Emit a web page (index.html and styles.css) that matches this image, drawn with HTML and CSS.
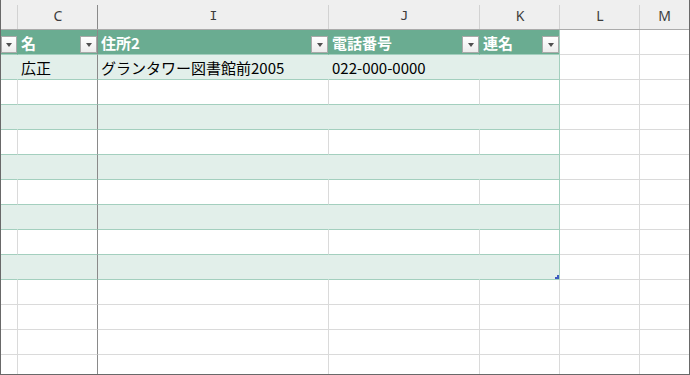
FILE: index.html
```html
<!DOCTYPE html>
<html lang="ja">
<head>
  <meta charset="UTF-8" />
  <title>連絡先リスト</title>
  <link rel="stylesheet" href="styles.css">
</head>
<body>

  <div class="sheet">
    <!-- 列見出し -->
    <div class="row row--cols">
      <div class="cell"></div>
      <div class="cell">C</div>
      <div class="cell"><span class="mono">I</span></div>
      <div class="cell"><span class="mono">J</span></div>
      <div class="cell">K</div>
      <div class="cell">L</div>
      <div class="cell">M</div>
    </div>

    <!-- テーブル見出し -->
    <div class="row row--head">
      <div class="cell"><button class="filter"></button></div>
      <div class="cell">名<button class="filter"></button></div>
      <div class="cell">住所2<button class="filter"></button></div>
      <div class="cell">電話番号<button class="filter"></button></div>
      <div class="cell">連名<button class="filter"></button></div>
      <div class="cell"></div>
      <div class="cell"></div>
    </div>

    <!-- データ行 -->
    <div class="row row--band">
      <div class="cell"></div>
      <div class="cell">広正</div>
      <div class="cell">グランタワー図書館前2005</div>
      <div class="cell">022-000-0000</div>
      <div class="cell"></div>
      <div class="cell"></div>
      <div class="cell"></div>
    </div>
    <div class="row row--plain">
      <div class="cell"></div><div class="cell"></div><div class="cell"></div><div class="cell"></div><div class="cell"></div><div class="cell"></div><div class="cell"></div>
    </div>
    <div class="row row--band">
      <div class="cell"></div><div class="cell"></div><div class="cell"></div><div class="cell"></div><div class="cell"></div><div class="cell"></div><div class="cell"></div>
    </div>
    <div class="row row--plain">
      <div class="cell"></div><div class="cell"></div><div class="cell"></div><div class="cell"></div><div class="cell"></div><div class="cell"></div><div class="cell"></div>
    </div>
    <div class="row row--band">
      <div class="cell"></div><div class="cell"></div><div class="cell"></div><div class="cell"></div><div class="cell"></div><div class="cell"></div><div class="cell"></div>
    </div>
    <div class="row row--plain">
      <div class="cell"></div><div class="cell"></div><div class="cell"></div><div class="cell"></div><div class="cell"></div><div class="cell"></div><div class="cell"></div>
    </div>
    <div class="row row--band">
      <div class="cell"></div><div class="cell"></div><div class="cell"></div><div class="cell"></div><div class="cell"></div><div class="cell"></div><div class="cell"></div>
    </div>
    <div class="row row--plain">
      <div class="cell"></div><div class="cell"></div><div class="cell"></div><div class="cell"></div><div class="cell"></div><div class="cell"></div><div class="cell"></div>
    </div>
    <div class="row row--band">
      <div class="cell"></div><div class="cell"></div><div class="cell"></div><div class="cell"></div>
      <div class="cell"><span class="handle"></span></div>
      <div class="cell"></div><div class="cell"></div>
    </div>

    <!-- テーブル外 -->
    <div class="row">
      <div class="cell"></div><div class="cell"></div><div class="cell"></div><div class="cell"></div><div class="cell"></div><div class="cell"></div><div class="cell"></div>
    </div>
    <div class="row">
      <div class="cell"></div><div class="cell"></div><div class="cell"></div><div class="cell"></div><div class="cell"></div><div class="cell"></div><div class="cell"></div>
    </div>
    <div class="row">
      <div class="cell"></div><div class="cell"></div><div class="cell"></div><div class="cell"></div><div class="cell"></div><div class="cell"></div><div class="cell"></div>
    </div>
    <div class="row">
      <div class="cell"></div><div class="cell"></div><div class="cell"></div><div class="cell"></div><div class="cell"></div><div class="cell"></div><div class="cell"></div>
    </div>
  </div>

</body>
</html>
```

FILE: styles.css
```css
/* ── 全体 ── */
html, body { margin:0; padding:0; background:#fff; }
body { font-family:"Noto Sans CJK JP", "Noto Sans", sans-serif; }

.sheet {
  width:690px; height:375px;
  box-sizing:border-box;
  border:1px solid #696969; border-top:0;
  overflow:hidden;
}

/* ── 行・セル ── */
.row {
  display:grid;
  grid-template-columns: 17px 80px 231px 151px 80px 80px 1fr;
  height:25px;
}
.cell {
  box-sizing:border-box;
  display:flex; align-items:center;
  padding-left:3px;
  border-right:1px solid #dadada;
  border-bottom:1px solid #dadada;
  font-size:15px; color:#000;
  white-space:nowrap; overflow:hidden;
  position:relative;
}
.cell:first-child { padding-left:0; }
.cell:last-child { border-right:0; }
/* ウィンドウ枠固定の線 */
.cell:nth-child(2) { border-right-color:#8a8a8a; }

/* ── 列見出し ── */
.row--cols { height:30px; background:#efefef; }
.row--cols .cell {
  justify-content:center;
  padding:2px 0 0;
  font-family:"Noto Sans", sans-serif;
  font-size:14px; color:#3c3c3c;
  border-right:0;
  border-bottom-color:#ababab;
  background: linear-gradient(#d2d2d2, #d2d2d2) right bottom / 1px 24px no-repeat;
}
.row--cols .cell:nth-child(2) {
  background: linear-gradient(#8a8a8a, #8a8a8a) right bottom / 1px 24px no-repeat;
}
.row--cols .cell:last-child { background:none; }
.mono { font-family:"DejaVu Sans Mono", monospace; font-size:13px; }

/* ── テーブル (A〜K列) ── */
.row--head .cell:nth-child(-n+5),
.row--band .cell:nth-child(-n+5),
.row--plain .cell:nth-child(-n+5) { border-bottom-color:#a3cfbe; }

.row--head .cell:nth-child(-n+5) {
  background:#6aac91;
  color:#fff; font-weight:bold;
  border-right-color:transparent;
}
.row--band .cell:nth-child(-n+5) {
  background:#e2efea;
  border-right-color:transparent;
}
.row--head .cell:nth-child(2),
.row--band .cell:nth-child(2) { border-right-color:#8a8a8a; }
.row--head .cell:nth-child(5),
.row--band .cell:nth-child(5),
.row--plain .cell:nth-child(5) { border-right-color:#a3cfbe; }

/* フィルターボタン */
.filter {
  margin:0 0 1px auto; padding:0;
  align-self:flex-end;
  width:17px; height:17px;
  flex-shrink:1;
  box-sizing:border-box;
  border:1px solid #a9a9a9;
  background:linear-gradient(#ffffff, #ececec);
  display:flex; align-items:center; justify-content:center;
}
.filter::after {
  content:"";
  border-left:3.5px solid transparent;
  border-right:3.5px solid transparent;
  border-top:4px solid #4f4f4f;
  margin-top:1px;
}

/* テーブル右下のサイズ変更ハンドル */
.handle {
  position:absolute; right:0; bottom:0;
  width:4px; height:4px;
  background:
    linear-gradient(#3d5cc0, #3d5cc0) right top / 2px 2px no-repeat,
    linear-gradient(#3d5cc0, #3d5cc0) left bottom / 4px 2px no-repeat;
}
```
